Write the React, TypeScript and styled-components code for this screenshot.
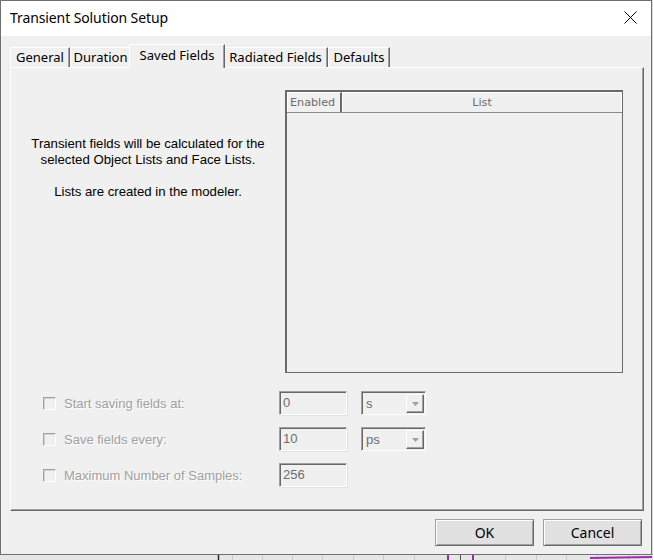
import React from "react";
import styled, { createGlobalStyle } from "styled-components";

const Global = createGlobalStyle`
  html, body { margin: 0; padding: 0; }
  body { width: 653px; height: 560px; overflow: hidden; background: #e4e4e4; }
`;

const Desktop = styled.div`
  position: relative;
  width: 653px;
  height: 560px;
  overflow: hidden;
  background: #e6e6e6;
`;

const Backdrop = styled.svg`
  position: absolute;
  left: 0;
  top: 0;
`;

const Window = styled.div`
  position: absolute;
  left: 0;
  top: 0;
  width: 652px;
  height: 555px;
  box-sizing: border-box;
  border: 1px solid #707070;
  background: #f0f0f0;
  display: flex;
  flex-direction: column;
  font-family: "Noto Sans", "Liberation Sans", sans-serif;
`;

const TitleBar = styled.div`
  height: 35px;
  flex: 0 0 35px;
  box-sizing: border-box;
  background: #ffffff;
  display: flex;
  align-items: center;
  justify-content: space-between;
  padding: 0 0 3px 9px;
`;

const Title = styled.div`
  font-size: 14px;
  color: #000;
  letter-spacing: -0.1px;
`;

const CloseButton = styled.div`
  width: 42px;
  height: 32px;
  display: flex;
  align-items: center;
  justify-content: center;
`;

const Body = styled.div`
  flex: 1;
  display: flex;
  flex-direction: column;
  padding: 8px 7px 0 9px;
`;

const TabStrip = styled.div`
  display: flex;
  align-items: flex-end;
  height: 23px;
  position: relative;
  z-index: 2;
`;

const Tab = styled.div<{ $w: number; $active?: boolean }>`
  box-sizing: border-box;
  width: ${(p) => p.$w + (p.$active ? 4 : 0)}px;
  height: ${(p) => (p.$active ? 24 : 20)}px;
  margin: 0 ${(p) => (p.$active ? "-2px" : "0")};
  margin-bottom: ${(p) => (p.$active ? "-1px" : "0")};
  position: relative;
  z-index: ${(p) => (p.$active ? 2 : 1)};
  background: #f0f0f0;
  border-top: 1px solid #ffffff;
  border-left: 1px solid #ffffff;
  border-right: 1px solid #696969;
  box-shadow: inset -1px 0 0 #a0a0a0;
  font-size: 13px;
  color: #000;
  display: flex;
  justify-content: center;
  align-items: ${(p) => (p.$active ? "flex-start" : "center")};
  padding-top: ${(p) => (p.$active ? "1px" : "0")};
  padding-bottom: ${(p) => (p.$active ? "0" : "2px")};
  white-space: nowrap;
`;

const Panel = styled.div`
  box-sizing: border-box;
  width: 634px;
  height: 444px;
  border-top: 1px solid #ffffff;
  border-left: 1px solid #ffffff;
  border-right: 1px solid #696969;
  border-bottom: 1px solid #696969;
  box-shadow: inset -1px -1px 0 #a0a0a0;
  display: flex;
  flex-direction: column;
  padding-top: 22px;
`;

const TopRow = styled.div`
  display: flex;
  height: 283px;
`;

const Note = styled.div`
  width: 274px;
  padding-top: 46px;
  text-align: center;
  font-family: "Liberation Sans", Arial, sans-serif;
  font-size: 13.2px;
  line-height: 16px;
  color: #000;
`;

const NoteLine = styled.p<{ $gap?: boolean }>`
  margin: 0;
  margin-top: ${(p) => (p.$gap ? "16px" : "0")};
  white-space: nowrap;
`;

const Table = styled.div`
  box-sizing: border-box;
  width: 338px;
  height: 283px;
  border-top: 2px solid #6a6a6a;
  border-left: 2px solid #6a6a6a;
  border-right: 1px solid #6a6a6a;
  border-bottom: 1px solid #6a6a6a;
  display: flex;
  flex-direction: column;
`;

const HeaderRow = styled.div`
  display: flex;
  height: 21px;
  box-sizing: border-box;
  border-bottom: 1px solid #8a8a8a;
`;

const HeaderCell = styled.div<{ $w?: number; $center?: boolean }>`
  box-sizing: border-box;
  ${(p) => (p.$w ? `width: ${p.$w}px;` : "flex: 1;")}
  border-top: 1px solid #ffffff;
  border-left: 1px solid #ffffff;
  border-right: ${(p) => (p.$w ? "2px solid #6a6a6a" : "1px solid #ffffff")};
  font-family: "DejaVu Sans", Tahoma, sans-serif;
  font-size: 11.2px;
  color: #6d6d6d;
  display: flex;
  align-items: center;
  justify-content: ${(p) => (p.$center ? "center" : "flex-start")};
  padding-left: ${(p) => (p.$center ? "0" : "2px")};
`;

const FormArea = styled.div`
  display: grid;
  grid-template-columns: 236px 82px 66px;
  grid-auto-rows: 24px;
  row-gap: 12px;
  padding-left: 32px;
  margin-top: 18px;
`;

const CheckLabel = styled.label`
  display: flex;
  align-items: center;
  gap: 8px;
  font-family: "Liberation Sans", Arial, sans-serif;
  font-size: 13px;
  color: #a0a0a0;
  text-shadow: 1px 1px 0 #ffffff;
  white-space: nowrap;
`;

const Box = styled.span`
  box-sizing: border-box;
  width: 13px;
  height: 13px;
  border-top: 1px solid #a0a0a0;
  border-left: 1px solid #a0a0a0;
  border-right: 1px solid #ffffff;
  border-bottom: 1px solid #ffffff;
  box-shadow: inset 1px 1px 0 #d4d4d4;
  background: #f0f0f0;
`;

const TextBox = styled.div`
  box-sizing: border-box;
  width: 68px;
  height: 24px;
  border-top: 1px solid #a0a0a0;
  border-left: 1px solid #a0a0a0;
  border-right: 1px solid #ffffff;
  border-bottom: 1px solid #ffffff;
  box-shadow: inset 1px 1px 0 #696969, 1px 1px 0 #e3e3e3;
  padding: 3px 0 0 3px;
  font-family: "Liberation Sans", Arial, sans-serif;
  font-size: 13px;
  color: #6d6d6d;
`;

const Combo = styled.div`
  box-sizing: border-box;
  width: 65px;
  height: 24px;
  border-top: 1px solid #a0a0a0;
  border-left: 1px solid #a0a0a0;
  border-right: 1px solid #ffffff;
  border-bottom: 1px solid #ffffff;
  box-shadow: inset 1px 1px 0 #696969;
  display: flex;
  align-items: stretch;
  padding: 2px 1px 1px 2px;
  font-family: "Liberation Sans", Arial, sans-serif;
  font-size: 13px;
  color: #6d6d6d;
`;

const ComboText = styled.div`
  flex: 1;
  padding: 2px 0 0 2px;
`;

const ComboArrow = styled.div`
  box-sizing: border-box;
  width: 18px;
  background: #f0f0f0;
  border-top: 1px solid #ffffff;
  border-left: 1px solid #ffffff;
  border-right: 1px solid #696969;
  border-bottom: 1px solid #696969;
  box-shadow: inset -1px -1px 0 #a0a0a0;
  display: flex;
  align-items: center;
  justify-content: center;
`;

const Footer = styled.div`
  display: flex;
  justify-content: flex-end;
  gap: 9px;
  padding: 8px 2px 0 0;
`;

const Button = styled.div`
  box-sizing: border-box;
  width: 99px;
  height: 27px;
  background: #e1e1e1;
  border: 1px solid #a0a0a0;
  border-right-color: #696969;
  border-bottom-color: #696969;
  box-shadow: inset 1px 1px 0 #ffffff, inset -1px -1px 0 #a0a0a0;
  display: flex;
  align-items: center;
  justify-content: center;
  font-size: 14px;
  color: #000;
`;

const rows = [
  { label: "Start saving fields at:", value: "0", unit: "s" },
  { label: "Save fields every:", value: "10", unit: "ps" },
  { label: "Maximum Number of Samples:", value: "256", unit: null },
];

const tabs = [
  { name: "General", w: 60 },
  { name: "Duration", w: 61 },
  { name: "Saved Fields", w: 92, active: true },
  { name: "Radiated Fields", w: 105 },
  { name: "Defaults", w: 62 },
];

function Arrow() {
  return (
    <svg width="7" height="4" viewBox="0 0 7 4">
      <path d="M0 0 H7 L3.5 4 Z" fill="#a0a0a0" />
    </svg>
  );
}

export default function App() {
  return (
    <Desktop>
      <Global />
      <Backdrop width="653" height="560" viewBox="0 0 653 560">
        <rect x="0" y="0" width="653" height="560" fill="#e6e6e6" />
        {[232, 262, 292, 322, 353, 383, 414, 505, 536, 566, 597, 628].map((x) => (
          <line key={x} x1={x + 0.5} y1="540" x2={x + 0.5} y2="560" stroke="#c9c9c9" strokeWidth="1" />
        ))}
        <line x1="218.5" y1="540" x2="218.5" y2="560" stroke="#2a2a2a" strokeWidth="1.5" />
        <line x1="448" y1="540" x2="448" y2="560" stroke="#a22ab0" strokeWidth="2" />
        <line x1="473" y1="540" x2="473" y2="560" stroke="#a22ab0" strokeWidth="2" />
        <line x1="460.5" y1="540" x2="460.5" y2="560" stroke="#555" strokeWidth="1" />
        <line x1="590" y1="558" x2="653" y2="557" stroke="#a22ab0" strokeWidth="2" />
        <line x1="652.5" y1="0" x2="652.5" y2="560" stroke="#d8d8d8" strokeWidth="1" />
      </Backdrop>
      <Window>
        <TitleBar>
          <Title>Transient Solution Setup</Title>
          <CloseButton>
            <svg width="13" height="13" viewBox="0 0 13 13">
              <path d="M0.5 0.5 L12.5 12.5 M12.5 0.5 L0.5 12.5" stroke="#000" strokeWidth="1" fill="none" />
            </svg>
          </CloseButton>
        </TitleBar>
        <Body>
          <TabStrip>
            {tabs.map((t) => (
              <Tab key={t.name} $w={t.w} $active={t.active}>
                {t.name}
              </Tab>
            ))}
          </TabStrip>
          <Panel>
            <TopRow>
              <Note>
                <NoteLine>Transient fields will be calculated for the</NoteLine>
                <NoteLine>selected Object Lists and Face Lists.</NoteLine>
                <NoteLine $gap>Lists are created in the modeler.</NoteLine>
              </Note>
              <Table>
                <HeaderRow>
                  <HeaderCell $w={55}>Enabled</HeaderCell>
                  <HeaderCell $center>List</HeaderCell>
                </HeaderRow>
              </Table>
            </TopRow>
            <FormArea>
              {rows.map((r) => (
                <React.Fragment key={r.label}>
                  <CheckLabel>
                    <Box />
                    {r.label}
                  </CheckLabel>
                  <TextBox>{r.value}</TextBox>
                  {r.unit ? (
                    <Combo>
                      <ComboText>{r.unit}</ComboText>
                      <ComboArrow>
                        <Arrow />
                      </ComboArrow>
                    </Combo>
                  ) : (
                    <span />
                  )}
                </React.Fragment>
              ))}
            </FormArea>
          </Panel>
          <Footer>
            <Button>OK</Button>
            <Button>Cancel</Button>
          </Footer>
        </Body>
      </Window>
    </Desktop>
  );
}
